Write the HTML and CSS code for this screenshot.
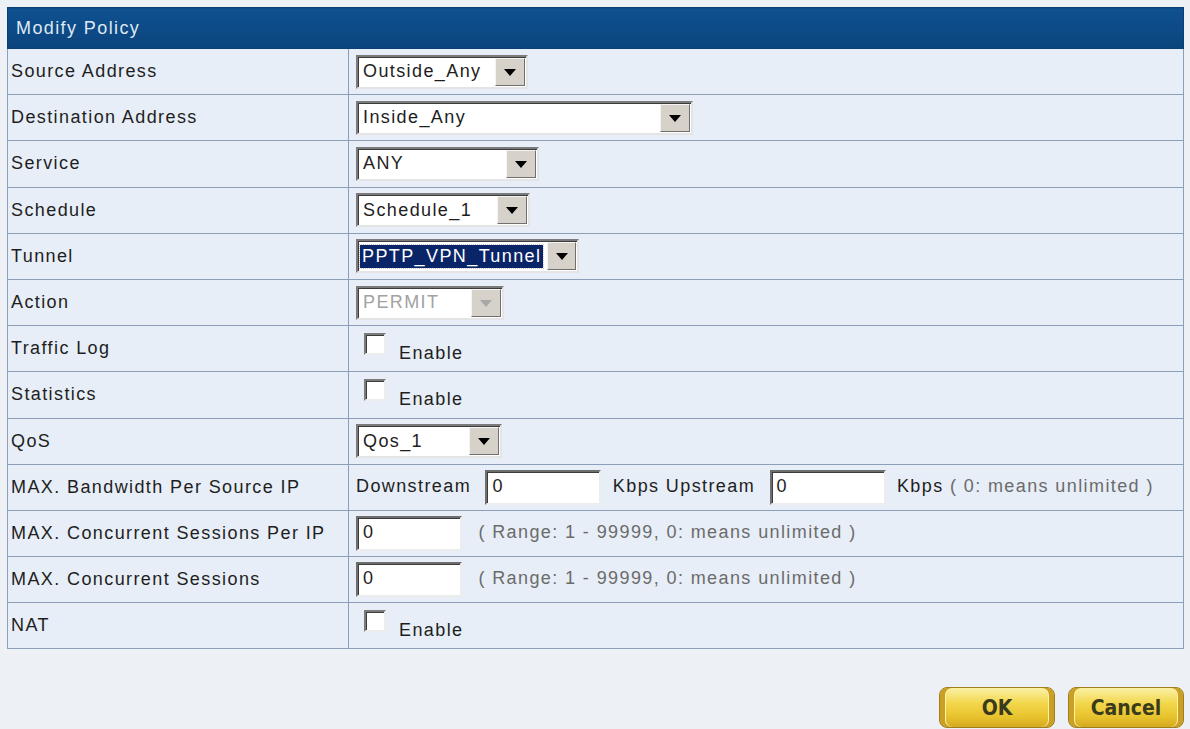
FILE: index.html
```html
<!DOCTYPE html>
<html lang="en">
<head>
  <meta charset="UTF-8">
  <title>Modify Policy</title>
  <link rel="stylesheet" href="styles.css">
</head>
<body>
  <table class="policy">
    <tr><th colspan="2">Modify Policy</th></tr>
    <tr>
      <td class="label">Source Address</td>
      <td class="value"><span class="combo" style="width:172px"><span class="val">Outside_Any</span><span class="drop"></span></span></td>
    </tr>
    <tr>
      <td class="label">Destination Address</td>
      <td class="value"><span class="combo" style="width:337px"><span class="val">Inside_Any</span><span class="drop"></span></span></td>
    </tr>
    <tr>
      <td class="label">Service</td>
      <td class="value"><span class="combo" style="width:183px"><span class="val">ANY</span><span class="drop"></span></span></td>
    </tr>
    <tr>
      <td class="label">Schedule</td>
      <td class="value"><span class="combo" style="width:174px"><span class="val">Schedule_1</span><span class="drop"></span></span></td>
    </tr>
    <tr>
      <td class="label">Tunnel</td>
      <td class="value"><span class="combo" style="width:223px"><span class="val"><span class="picked">PPTP_VPN_Tunnel</span></span><span class="drop"></span></span></td>
    </tr>
    <tr>
      <td class="label">Action</td>
      <td class="value"><span class="combo off" style="width:148px"><span class="val">PERMIT</span><span class="drop"></span></span></td>
    </tr>
    <tr>
      <td class="label">Traffic Log</td>
      <td class="value"><span class="check"></span><span class="opt">Enable</span></td>
    </tr>
    <tr>
      <td class="label">Statistics</td>
      <td class="value"><span class="check"></span><span class="opt">Enable</span></td>
    </tr>
    <tr>
      <td class="label">QoS</td>
      <td class="value"><span class="combo" style="width:146px"><span class="val">Qos_1</span><span class="drop"></span></span></td>
    </tr>
    <tr>
      <td class="label">MAX. Bandwidth Per Source IP</td>
      <td class="value">Downstream <span class="field">0</span> Kbps Upstream <span class="field">0</span> Kbps <span class="hint">( 0: means unlimited )</span></td>
    </tr>
    <tr>
      <td class="label">MAX. Concurrent Sessions Per IP</td>
      <td class="value"><span class="field short">0</span> <span class="hint">( Range: 1 - 99999, 0: means unlimited )</span></td>
    </tr>
    <tr>
      <td class="label">MAX. Concurrent Sessions</td>
      <td class="value"><span class="field short">0</span> <span class="hint">( Range: 1 - 99999, 0: means unlimited )</span></td>
    </tr>
    <tr>
      <td class="label">NAT</td>
      <td class="value"><span class="check"></span><span class="opt">Enable</span></td>
    </tr>
  </table>

  <div class="actions">
    <button class="gold">OK</button>
    <button class="gold">Cancel</button>
  </div>
</body>
</html>
```

FILE: styles.css
```css
body { margin: 0; padding: 7px 6px 0 7px; background: #edf0f5; font-family: "Liberation Sans", Arial, sans-serif; font-size: 18px; letter-spacing: 1.4px; color: #1e1e1e; }

.policy { width: 1177px; border-collapse: collapse; border: 1px solid #8c9fb9; }
.policy th { height: 40px; padding: 0 0 0 8px; text-align: left; font-weight: normal; color: #dfe8f3; background: linear-gradient(#0f5190, #0b447e); border: 1px solid #0b3f74; }
.policy td { height: 45.2px; padding: 0; background: #e7eef7; border: 1px solid #8c9fb9; white-space: nowrap; }
.policy td.label { width: 337px; padding-left: 3px; }
.policy td.value { padding-left: 7px; }

/* classic sunken drop-down */
.combo { display: inline-flex; align-items: stretch; height: 34px; box-sizing: border-box; vertical-align: middle; background: #fff; border: 2px solid; border-color: #7b7b7b #e4e4e4 #e4e4e4 #7b7b7b; box-shadow: inset 1px 1px 0 #3c3c3c; }
.combo .val { flex: 1; display: flex; align-items: center; padding: 0 4px 0 5px; }
.combo .drop { width: 28px; margin: 1px 1px 1px 0; background: #d6d2ca; border: 1px solid; border-color: #f4f4f4 #6f6f6f #6f6f6f #f4f4f4; position: relative; }
.combo .drop::after { content: ""; position: absolute; left: 50%; top: 50%; margin: -3px 0 0 -6px; border: 6px solid transparent; border-top: 7px solid #000; border-bottom: 0; }
.combo .picked { background: #0a2468; color: #fff; outline: 1px dotted #c8c8c8; padding: 1px 2px; margin-left: -3px; }
.combo.off { color: #a2a2a2; }
.combo.off .drop::after { border-top-color: #a8a8a8; }

.check { display: inline-block; width: 22px; height: 22px; box-sizing: border-box; margin: 0 13px 0 8px; vertical-align: -3px; background: #fff; border: 2px solid; border-color: #7b7b7b #ececec #ececec #7b7b7b; box-shadow: inset 1px 1px 0 #3c3c3c; }
.opt { vertical-align: -7px; }

.field { display: inline-block; width: 116px; height: 35px; box-sizing: border-box; padding: 4px 0 0 5px; margin: 0 5px 0 8px; vertical-align: middle; background: #fff; border: 2px solid; border-color: #6e6e6e #ececec #ececec #6e6e6e; box-shadow: inset 1px 1px 0 #3c3c3c; }
.field.short { width: 106px; margin: 0 10px 0 0; }
.hint { color: #6b6b6b; }

.actions { display: flex; justify-content: flex-end; gap: 13px; margin-top: 38px; }
.gold { width: 116px; height: 41px; padding: 0; border: 1px solid #a07e1a; border-radius: 8px; background: linear-gradient(#fbf1a6, #f2d64a 40%, #e8c22d 75%, #d3a91f); box-shadow: inset 5px 0 0 #c99f26, inset -5px 0 0 #c99f26, inset 6px 0 0 #fff2a0, inset -6px 0 0 #fff2a0; font-family: "DejaVu Sans Condensed", "DejaVu Sans", sans-serif; font-weight: bold; font-size: 21px; letter-spacing: 0; color: #3a3a1c; }
```
